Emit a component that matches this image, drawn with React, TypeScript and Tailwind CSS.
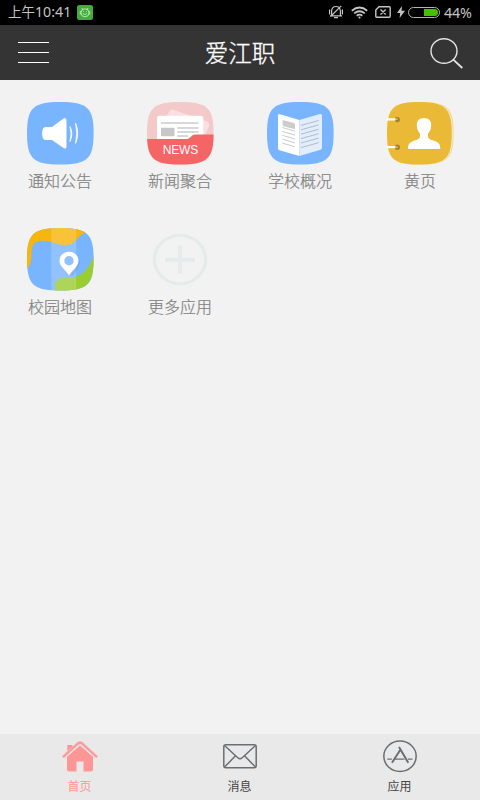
import React from "react";

const SQUIRCLE =
  "M0 31.2C0 6 6 0 33.3 0S66.6 6 66.6 31.2S60.6 62.5 33.3 62.5S0 56.5 0 31.2Z";

function NoticeIcon() {
  return (
    <svg viewBox="0 0 67 63" className="h-[63px] w-[67px]">
      <path d={SQUIRCLE} fill="#79b4fe" />
      <path
        d="M18.5 25H25L36.5 16.5Q39.5 15 39.5 19V43.5Q39.5 48 36.5 46L25 38H18.5C14 38 14 25 18.5 25Z"
        fill="#fff"
      />
      <path d="M43 24.5Q46.6 31.5 43 39.5Q45 32 43 24.5Z" fill="#fff" stroke="#fff" strokeWidth="0.8" />
      <path d="M48.5 21Q53 31.5 48.5 41.5Q51 31 48.5 21Z" fill="#fff" stroke="#fff" strokeWidth="0.8" />
    </svg>
  );
}

function NewsIcon() {
  return (
    <svg viewBox="0 0 67 63" className="h-[63px] w-[67px]">
      <clipPath id="news-clip">
        <path d={SQUIRCLE} />
      </clipPath>
      <g clipPath="url(#news-clip)">
        <rect width="67" height="63" fill="#f4c9ca" />
        <path d="M20 13L23 8.5Q24 7 26.5 7.7L60 19.5Q63 21 62 24L57 36H20Z" fill="#f9dfe0" />
        <rect x="10" y="13.7" width="46.3" height="30" rx="2.5" fill="#fff" />
        <path d="M14 21H51.5M30.3 26H51.5M30.3 30H51.5M30.3 34H41" stroke="#ccc" strokeWidth="1.4" />
        <rect x="14" y="25.7" width="13.5" height="8.5" rx="0.8" fill="#c8c8c8" />
        <path d="M0 37H39.5Q41.5 37 43 35.5L45 33.7Q46.3 32.5 48.5 32.5H67V63H0Z" fill="#f56566" />
      </g>
      <text
        x="15.7"
        y="52"
        textLength="35.5"
        fontSize="12"
        fill="#fff"
        className="font-['Liberation_Sans',sans-serif]"
      >
        NEWS
      </text>
    </svg>
  );
}

function SchoolIcon() {
  return (
    <svg viewBox="0 0 67 63" className="h-[63px] w-[67px]">
      <path d={SQUIRCLE} fill="#79b4fe" />
      <path d="M11 13.5Q11 11.8 13 12.3L32.3 18V54L12.5 48.3Q11 47.7 11 46Z" fill="#fff" />
      <path d="M32.3 18L53 12Q55 11.5 55 13.5V45.5Q55 47.3 53.5 47.7L32.3 54Z" fill="#e1edfc" />
      <path d="M16.5 18.3L27 21Q28 21.4 28 22.3V27.2L16.5 24.2Q15.6 24 15.6 23V19Q15.6 18 16.5 18.3Z" fill="#ccc" />
      <path
        d="M15.3 25.5L28 29.2M15.3 29.4L28 33.1M15.3 33.3L28 37M15.3 37.2L28 40.9M15.3 41.1L28 44.8"
        stroke="#c6c6c6"
        strokeWidth="0.9"
      />
      <path
        d="M34 23.4L51.6 18.5M34 27.8L51.6 22.9M34 32.2L51.6 27.3M34 36.6L51.6 31.7M34 41L51.6 36.1M34 45.6L51.6 40.7"
        stroke="#b4bcc6"
        strokeWidth="1"
      />
    </svg>
  );
}

function YellowPagesIcon() {
  return (
    <svg viewBox="0 0 67 63" className="h-[63px] w-[67px]">
      <path d={SQUIRCLE} fill="#ecd38a" />
      <path
        d="M0 31.2C0 6 6 0 32.5 0S65.7 6 65.7 31.2S59.8 62.5 32.5 62.5S0 56.5 0 31.2Z"
        fill="#fbf3dc"
      />
      <path
        d="M0 31.2C0 6 6 0 32 0S64.8 6 64.8 31.2S58.8 62.5 32 62.5S0 56.5 0 31.2Z"
        fill="#eaba36"
      />
      {/* binder rings */}
      <circle cx="10.3" cy="17.6" r="2.7" fill="#a9832c" />
      <circle cx="10.3" cy="45.3" r="2.7" fill="#a9832c" />
      <path d="M0 17.3H8.5M0 45.2H8.5" stroke="#fff" strokeWidth="2.2" />
      <path d="M8 17.3H10.5M8 45.2H10.5" stroke="#d3c39a" strokeWidth="1.6" />
      {/* person */}
      <path
        d="M37 16C42 16 44.5 19 44.2 23.5C44 27 43 29.5 41 31.5V34C41 37 43.5 37.6 47 38.8C51.5 40.3 53.3 42 53.3 47H21C21 42 22.8 40.3 27 38.8C30.5 37.6 33 37 33 34V31.5C31 29.5 30 27 29.8 23.5C29.5 19 32 16 37 16Z"
        fill="#fff"
      />
    </svg>
  );
}

function MapIcon() {
  return (
    <svg viewBox="0 0 67 63" className="h-[63px] w-[67px]">
      <clipPath id="map-clip">
        <path d={SQUIRCLE} />
      </clipPath>
      <g clipPath="url(#map-clip)">
        <rect width="67" height="63" fill="#79b4fe" />
        <path
          d="M0 40C6 36 3.5 28 5 20C6.5 13 13 12.3 20 13C27 13.7 31 17.3 39 17.3C49 17 49 8 60 3.5V0H0Z"
          fill="#f7b60e"
        />
        <path
          d="M67 28C64 34 63 37 59.7 41C55 46 52 48.8 46 48.9C38 49 28.3 49 28 57V63H67Z"
          fill="#9acd32"
        />
        <rect x="24.2" width="25" height="63" fill="#fff" fillOpacity="0.19" />
        <path d="M51.8 33C52 39 46 43 43 48L46 47C49 43 54 38 52.5 31Z" fill="#5f93d6" fillOpacity="0.4" />
        <path
          fillRule="evenodd"
          d="M42 23.8C47.6 23.8 51.5 27.8 51.5 32.8C51.5 38.5 45 42 42 47.5C39 42 32.5 38.5 32.5 32.8C32.5 27.8 36.4 23.8 42 23.8ZM42 28A4.7 4.7 0 1 0 42 37.4A4.7 4.7 0 1 0 42 28Z"
          fill="#fff"
        />
      </g>
    </svg>
  );
}

function MoreIcon() {
  return (
    <svg viewBox="0 0 67 63" className="h-[63px] w-[67px]" fill="none" stroke="#e4ebea">
      <ellipse cx="33" cy="31.5" rx="25.6" ry="24.2" strokeWidth="3" />
      <path d="M18 31.7H48M33 17.7V45.3" strokeWidth="4" />
    </svg>
  );
}

const APPS = [
  { title: "通知公告", icon: NoticeIcon },
  { title: "新闻聚合", icon: NewsIcon },
  { title: "学校概况", icon: SchoolIcon },
  { title: "黄页", icon: YellowPagesIcon },
  { title: "校园地图", icon: MapIcon },
  { title: "更多应用", icon: MoreIcon },
];

function HomeIcon() {
  return (
    <svg viewBox="0 0 36 34" className="h-[34px] w-9" fill="#ff9696">
      <path d="M5.3 5H10.5V9L5.3 14Z" />
      <path d="M18 5.5L31 16.8V29Q31 31.5 28.5 31.5H21.5V21.5H14.5V31.5H7.5Q5 31.5 5 29V16.8Z" />
      <path d="M1 17.2L16 3.4Q18 1.8 20 3.4L35 17.2" fill="none" stroke="#f4bcbc" strokeWidth="3" />
      <path d="M1 17.2L16 3.4Q18 1.8 20 3.4L35 17.2" fill="none" stroke="#ff9696" strokeWidth="1.6" />
    </svg>
  );
}

function MailIcon() {
  return (
    <svg viewBox="0 0 36 34" className="h-[34px] w-9" fill="none" stroke="#6a6f72" strokeWidth="1.5">
      <rect x="1.8" y="4.8" width="32.4" height="23" rx="2" />
      <path d="M2.5 5.5L15.8 17.8Q18 19.8 20.2 17.8L33.5 5.5M2.5 27.1L13.5 15.8M33.5 27.1L22.5 15.8" />
    </svg>
  );
}

function AppStoreIcon() {
  return (
    <svg viewBox="0 0 36 34" className="h-[34px] w-9" fill="none" stroke="#6a6f72" strokeWidth="1.5">
      <ellipse cx="18" cy="16.3" rx="16.2" ry="15.2" />
      <path d="M5.3 19.2H9.8M12.5 19.2H22.5M26 19.2H30.5" strokeWidth="1.3" />
      <path d="M18.5 9.5L10 22.8M17 7L26.3 22.8" strokeWidth="2" />
    </svg>
  );
}

const TABS = [
  { title: "首页", icon: HomeIcon, color: "text-[#ff9696]" },
  { title: "消息", icon: MailIcon, color: "text-[#444]" },
  { title: "应用", icon: AppStoreIcon, color: "text-[#444]" },
];

function StatusBar() {
  return (
    <div className="flex h-[25px] items-center justify-between bg-black pl-2 pr-2 text-[#c4c4c4]">
      <div className="flex items-center">
        <span className="w-[63px] whitespace-nowrap text-[13.5px] leading-none">
          上午<span className="font-['Noto_Sans'] text-[14.2px]">10:41</span>
        </span>
        {/* assistant badge */}
        <svg viewBox="0 0 16 15" className="ml-[6px] h-[15px] w-4">
          <rect width="16" height="15" rx="2.5" fill="#43ad3c" />
          <g fill="none" stroke="#d5efcd" strokeWidth="0.8">
            <circle cx="8" cy="7.8" r="4" />
            <path d="M5 3L5.8 4.7M11 3L10.2 4.7M3.3 6V9.5M12.7 6V9.5M6 8.5Q8 10.5 10 8.5M6 6.5H6.8M9.2 6.5H10" />
          </g>
        </svg>
      </div>

      <div className="flex items-center">
        {/* muted bell */}
        <svg viewBox="0 0 16 14" className="h-[14px] w-4" fill="none" stroke="#c4c4c4" strokeWidth="1.2">
          <path d="M3.6 10.5V6Q4 1.5 8 1.5T12.4 6V10.5M2 10.8H14M6 12.7H10M13.2 0.8L2.6 11.5M1.6 4.5V9.5M14.4 4.5V9.5" />
        </svg>
        {/* wifi */}
        <svg viewBox="0 0 17 13" className="ml-[7px] h-[13px] w-[17px]" fill="none" stroke="#c4c4c4" strokeWidth="1.8">
          <path d="M0.8 4.8Q8.5 -1.7 16.2 4.8M3.2 7.4Q8.5 3 13.8 7.4M5.7 9.8Q8.5 7.4 11.3 9.8" />
          <circle cx="8.5" cy="11.5" r="1.1" fill="#c4c4c4" stroke="none" />
        </svg>
        {/* no sim */}
        <svg viewBox="0 0 16 12" className="ml-[7px] h-3 w-4" fill="none" stroke="#c4c4c4" strokeWidth="1.4">
          <path d="M4 0.7H14.2Q15.2 0.7 15.2 1.7V10.3Q15.2 11.3 14.2 11.3H1.8Q0.8 11.3 0.8 10.3V4ZM5.5 3.5L10.7 8.5M10.7 3.5L5.5 8.5" />
        </svg>
        {/* charging */}
        <svg viewBox="0 0 8 12" className="ml-[6px] h-3 w-2" fill="#c4c4c4">
          <path d="M5 0L0 7H3.2L2.6 12L8 4.8H4.6Z" />
        </svg>
        <div className="ml-[3px] flex h-[11px] w-[32px] justify-end rounded-full border border-[#b4b4b4] p-px">
          <div className="h-full w-[14px] rounded-r-full bg-[#46c000]" />
        </div>
        <span className="ml-1 w-7 whitespace-nowrap pt-px font-['Noto_Sans'] text-[14.3px] leading-none tracking-[-0.2px]">
          44%
        </span>
      </div>
    </div>
  );
}

export default function App() {
  return (
    <div className="flex h-[800px] w-[480px] flex-col overflow-hidden bg-[#f2f2f2] font-['Noto_Sans_CJK_SC',sans-serif]">
      <StatusBar />

      {/* Header */}
      <header className="flex h-[55px] items-center justify-between bg-[#343434] pl-[18px] pr-4">
        <div className="flex w-[33px] flex-col gap-[9px]">
          <div className="h-px w-[31px] bg-white" />
          <div className="h-px w-[31px] bg-white" />
          <div className="h-px w-[31px] bg-white" />
        </div>
        <h1 className="mr-px text-[23.5px] font-light text-white [-webkit-text-stroke:0.35px_white]">爱江职</h1>
        <svg viewBox="0 0 34 32" className="h-8 w-[34px]" fill="none" stroke="#e4e4e4" strokeWidth="1.4">
          <ellipse cx="14" cy="14" rx="13" ry="12.3" />
          <path d="M23 22.3L32.3 31" strokeWidth="1.8" />
        </svg>
      </header>

      {/* App grid */}
      <main className="grid flex-1 auto-rows-[126px] grid-cols-4 content-start pt-[22px]">
        {APPS.map((app) => (
          <div key={app.title} className="flex flex-col items-center">
            <app.icon />
            <span className="mt-[3px] text-base font-light leading-6 text-[#808080] [-webkit-text-stroke:0.2px_#808080]">
              {app.title}
            </span>
          </div>
        ))}
      </main>

      {/* Tab bar */}
      <nav className="grid h-[66px] grid-cols-3 bg-[#e9e9e9] pt-[6px]">
        {TABS.map((tab) => (
          <div key={tab.title} className="flex flex-col items-center">
            <tab.icon />
            <span className={`mr-px mt-[3px] text-xs leading-[18px] ${tab.color}`}>{tab.title}</span>
          </div>
        ))}
      </nav>
    </div>
  );
}
